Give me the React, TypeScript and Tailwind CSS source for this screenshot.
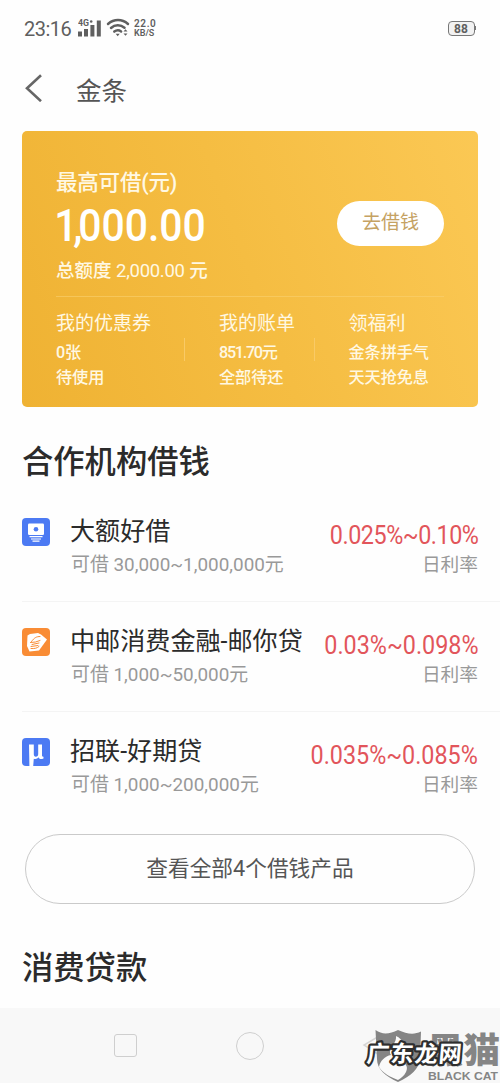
import { ReactNode } from 'react';

type Product = {
  name: string;
  range: string;
  rate: string;
  tracking: string;
  icon: ReactNode;
};

const BENEFITS = [
  { title: '我的优惠券', lines: ['0张', '待使用'], width: 'w-[163px]', tracking: 'tracking-[-0.1px]' },
  { title: '我的账单', lines: ['851.70元', '全部待还'], width: 'w-[129.500px]', tracking: 'tracking-[-1.300px]' },
  { title: '领福利', lines: ['金条拼手气', '天天抢免息'], width: 'w-[95px]', tracking: 'tracking-[-0.1px]' },
];

const PRODUCTS: Product[] = [
  {
    name: '大额好借',
    range: '30,000~1,000,000元',
    rate: '0.025%~0.10%',
    tracking: 'tracking-[-0.500px]',
    icon: <CashIcon />,
  },
  {
    name: '中邮消费金融-邮你贷',
    range: '1,000~50,000元',
    rate: '0.03%~0.098%',
    tracking: 'tracking-normal',
    icon: <PostIcon />,
  },
  {
    name: '招联-好期贷',
    range: '1,000~200,000元',
    rate: '0.035%~0.085%',
    tracking: 'tracking-normal',
    icon: <MuIcon />,
  },
];

function CashIcon() {
  return (
    <svg className="h-7 w-7" viewBox="0 0 28 28" aria-hidden="true">
      <rect width="28" height="28" rx="4" fill="#4c7af3" />
      <rect x="6" y="5.5" width="16" height="11.5" rx="1.2" fill="#fff" />
      <circle cx="14" cy="11.3" r="2.3" fill="#4c7af3" />
      <path d="M7.5 18.6h13M9 21h10M10.5 23.2h7" stroke="#fff" strokeWidth="1.2" />
    </svg>
  );
}

function PostIcon() {
  return (
    <svg className="h-7 w-7" viewBox="0 0 28 28" aria-hidden="true">
      <rect width="28" height="28" rx="4" fill="#f98c35" />
      <path d="M5.500 7.500 8 6l8-1 3 1.500 6 5L17 22.500 7.500 23.500 5 18z" fill="#fff" />
      <path
        d="M9.500 13.500c3-4 5-5 8.500-5M8.500 14.500l5-.5 4.500-1.500M10 16.500l7-1.500M9 18.500l7-1M9 20.500c3.500.3 6-.2 8-2"
        fill="none"
        stroke="#f98c35"
        strokeWidth="1"
        strokeLinecap="round"
      />
    </svg>
  );
}

function MuIcon() {
  return (
    <svg className="h-7 w-7" viewBox="0 0 28 28" aria-hidden="true">
      <rect width="28" height="28" rx="4" fill="#4c7af3" />
      <path
        d="M7 6.500h4.800v9.800c0 1.700.7 2.400 2 2.400 1.500 0 2.400-1 2.400-2.700V6.500h3.800v10.800c0 1.200.4 1.500 1.500 1.400v1.800c-2.500 1.100-4.500.7-5-1.200-1.200 1.600-3 2.100-4.700 1.400l-.6 7.300H7.400z"
        fill="#fff"
      />
    </svg>
  );
}

function StatusBar() {
  return (
    <div className="flex h-14 items-center pl-6 pr-[24px] text-[#5f5f5f]">
      <span className="w-[54px] pt-0.5 text-[20px] tracking-[-0.5px]">23:16</span>
      <svg className="h-[18px] w-[24px]" viewBox="0 0 24 18" fill="currentColor" aria-hidden="true">
        <text x="0" y="7" fontSize="9" fontWeight="700" textLength="11" lengthAdjust="spacingAndGlyphs">
          4G
        </text>
        <circle cx="13.2" cy="2.5" r="1.3" />
        <path d="M0 12.500h4v5H0zM6 10h4v7.500H6zM12.400 6h4v11.500h-4zM18.800 1.500h4v16h-4z" />
      </svg>
      <svg className="ml-1 h-[20px] w-[24px]" viewBox="0 0 24 20" fill="none" aria-hidden="true">
        <g stroke="currentColor" strokeWidth="2.5" strokeLinecap="round">
          <path d="M2 6C8 .8 16 .8 22 6" />
          <path d="M5 10c4-3.600 9.500-3.600 13.500-.2" />
          <path d="M8.300 13.600c2.200-1.700 4.700-1.700 6.800-.2" />
        </g>
        <path d="M9.700 15.800h4l-2 2.500zM17.500 13.600l2-2.300 2 2.300zM17.500 15.400h4l-2 2.300z" fill="currentColor" />
      </svg>
      <div className="ml-1 pt-px text-[9px] leading-[9.500px] font-semibold">
        <div className="text-[10px] tracking-[0.6px]">22.0</div>
        <div>KB/S</div>
      </div>
      <div className="ml-auto flex items-center">
        <div className="flex h-[15px] w-[27px] items-center justify-center rounded-[4px] border-[1.5px] border-[#777] bg-[#f2f2f2] pt-px text-[12px] font-bold tracking-[0.2px]">
          88
        </div>
        <div className="h-[4px] w-[1.500px] bg-[#777]" />
      </div>
    </div>
  );
}

function TitleBar() {
  return (
    <header className="flex h-[75px] items-center pb-[11px] text-[#555]">
      <button className="ml-6 w-[52px]" aria-label="返回">
        <svg className="h-7 w-[18px]" viewBox="0 0 18 28" fill="none" stroke="#666" strokeWidth="2.6" aria-hidden="true">
          <path d="M17 1.200 3 14.200l14 13" />
        </svg>
      </button>
      <h1 className="pt-[5px] text-[25.500px] leading-[36px]">金条</h1>
    </header>
  );
}

function CreditCard() {
  return (
    <section className="mx-[22px] h-[276px] rounded-[5px] bg-linear-[70deg] from-[#efb233] via-[#f5bd42] to-[#fbc854] px-[34px] pt-[37px] text-[#fff8e3]">
      <div className="flex justify-between">
        <div className="whitespace-nowrap">
          <p className="h-[30px] text-[21.500px] leading-[30px] font-medium tracking-[-0.2px]">最高可借(元)</p>
          <p className="h-[56px] w-[170px] origin-left scale-x-[0.93] text-[44px] leading-[56px] font-medium text-white">
            <span className="-ml-[2px] tracking-[-4.500px]">1,</span>
            <span>000.00</span>
          </p>
          <p className="h-[34px] text-[18.500px] leading-[34px] font-medium">
            总额度 <span className="font-normal tracking-[-0.3px]">2,000.00</span> 元
          </p>
        </div>
        <button className="mt-[33px] h-[45px] w-[107px] rounded-full bg-white text-[19px] text-[#c5a263]">
          去借钱
        </button>
      </div>
      <div className="mt-[8px] border-t border-[#fad07099]" />
      <div className="flex pt-[11px]">
        {BENEFITS.map((item, i) => (
          <div key={item.title} className={`flex ${item.width}`}>
            <div className="flex-1 whitespace-nowrap">
              <p className="text-[19px] leading-[32px]">{item.title}</p>
              <p className={`text-[16.200px] leading-[25px] font-medium ${item.tracking}`}>{item.lines[0]}</p>
              <p className="text-[16.200px] leading-[25.500px] font-medium tracking-[-0.1px]">{item.lines[1]}</p>
            </div>
            {i < 2 && <div className="mt-[30px] mr-[34px] h-[23px] w-px bg-[#f9ca66]" />}
          </div>
        ))}
      </div>
    </section>
  );
}

function ProductRow({ name, range, rate, tracking, icon }: Product) {
  return (
    <li className="ml-[22px] flex h-[110px] border-b border-[#f4f4f4] pt-[21px] pr-[22px] last:border-0">
      <div className="w-[48px] shrink-0 pt-[5px]">{icon}</div>
      <div className="flex-1 pt-px whitespace-nowrap">
        <h3 className="text-[25.100px] leading-[36px] text-[#2b2b2b]">{name}</h3>
        <p className="pl-px text-[18.900px] leading-[30px] text-[#999]">可借 {range}</p>
      </div>
      <div className="w-[156px] text-right whitespace-nowrap">
        <p className="flex justify-end pt-[4px] text-[25.500px] leading-[36px] text-[#e2555b]">
          <span className={`origin-right scale-x-[0.915] ${tracking}`}>{rate}</span>
        </p>
        <p className="-mt-[3px] text-[18.700px] leading-[30px] text-[#999]">日利率</p>
      </div>
    </li>
  );
}

function Watermark() {
  return (
    <svg className="absolute right-0 bottom-0 h-[65px] w-[140px]" viewBox="360 1018 140 65" aria-hidden="true">
      <path d="M381 1035 364 1045l17 11z" fill="none" stroke="#d5d5d5" strokeWidth="1.500" />
      <path
        d="M375.500 1030c7 5 14 4 22.500 0 9 4 16 5 23 1.500l-1 27.500c-1 10-9 17-22 23-13-6-21-13-21-23z"
        fill="#858585"
      />
      <path
        d="M396 1036c7 3 10 10 4 16-5 4-6 5-4 9 9 0 13 5 10 11-2 4-5 6-8 8-8-3-15-7-19-13 1-6 6-11 12-12-4-6 6-11 5-19z"
        fill="#fafafa"
      />
      <text
        x="427"
        y="1062.500"
        textLength="73"
        lengthAdjust="spacingAndGlyphs"
        fill="#858585"
        fontSize="35"
        fontWeight="900"
        fontFamily="Noto Sans CJK SC"
      >
        黑猫
      </text>
      <text
        x="428"
        y="1080"
        textLength="70"
        lengthAdjust="spacingAndGlyphs"
        fill="#858585"
        fontSize="11"
        fontWeight="700"
        fontFamily="Liberation Sans"
      >
        BLACK CAT
      </text>
      <text
        x="366"
        y="1062"
        textLength="95"
        fill="#fff"
        stroke="#2e2e2e"
        strokeWidth="4.500"
        strokeLinejoin="round"
        paintOrder="stroke"
        fontSize="23"
        fontWeight="700"
        fontFamily="Noto Sans CJK SC"
        transform="translate(93 0) skewX(-5)"
      >
        广东龙网
      </text>
    </svg>
  );
}

function NavigationBar() {
  return (
    <footer className="relative flex h-[75px] items-center bg-[#f8f8f8]">
      <div className="ml-[113.500px] h-[23px] w-[23px] rounded-[3px] border-[1.500px] border-[#cfcfcf]" />
      <div className="ml-[99.500px] h-7 w-7 rounded-full border-[1.500px] border-[#cfcfcf]" />
      <Watermark />
    </footer>
  );
}

export default function App() {
  return (
    <div className="flex h-[1083px] w-[500px] flex-col overflow-hidden bg-[#fefefe] font-[Roboto,'Noto_Sans_CJK_SC',sans-serif]">
      <StatusBar />
      <TitleBar />
      <CreditCard />
      <h2 className="mt-[34px] ml-[22px] h-[51px] shrink-0 text-[31.300px] leading-[44px] font-medium text-[#2b2b2b]">
        合作机构借钱
      </h2>
      <ul>
        {PRODUCTS.map((product) => (
          <ProductRow key={product.name} {...product} />
        ))}
      </ul>
      <button className="mx-[25px] mt-[12px] h-[70px] shrink-0 rounded-full border border-[#cacaca] text-[21.700px] text-[#555]">
        查看全部4个借钱产品
      </button>
      <h2 className="mt-[43px] ml-[22px] h-[61px] shrink-0 text-[31.300px] leading-[44px] font-medium text-[#2b2b2b]">
        消费贷款
      </h2>
      <NavigationBar />
    </div>
  );
}
